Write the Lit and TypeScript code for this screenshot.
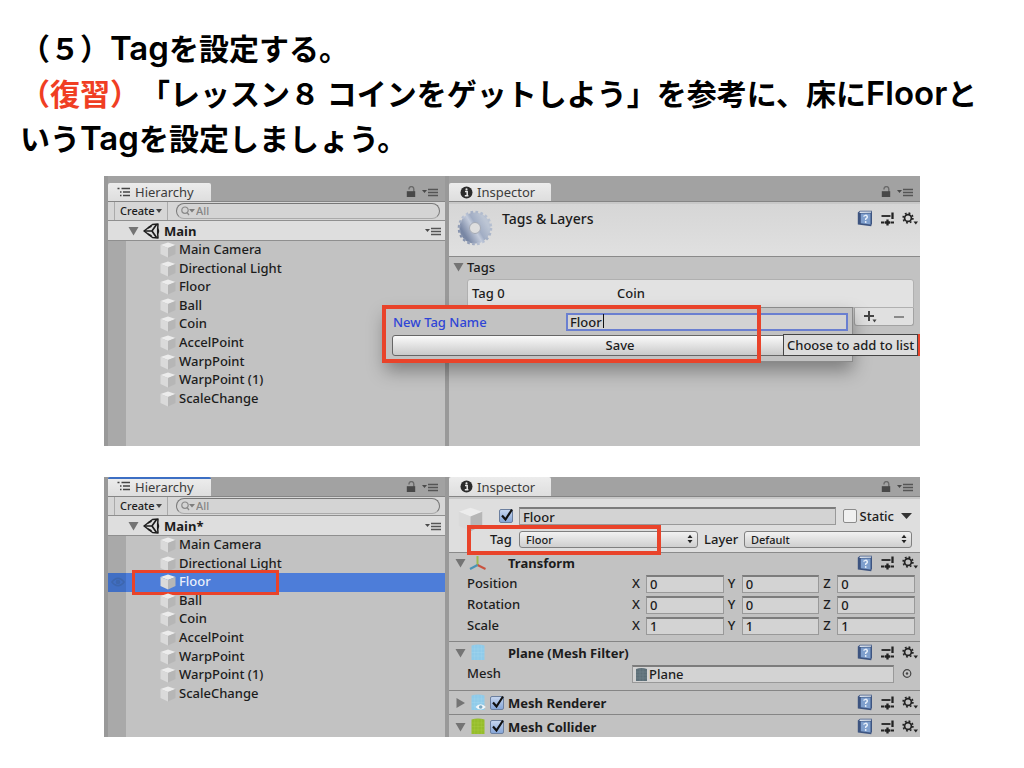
import { LitElement, html, css, svg, nothing } from "lit";
import { customElement, property } from "lit/decorators.js";

const base = css`
  * { box-sizing: border-box; }
  :host { display: block; min-width: 0; font: 500 13px/18px "Noto Sans", "Open Sans", sans-serif; color: #1c1c1c; }
  button, input, select {
    font: inherit; color: inherit; margin: 0; padding: 0; border: 0;
    background: none; border-radius: 0; appearance: none; outline: 0; min-width: 0;
  }
  svg { display: block; flex: none; }
  button { display: flex; align-items: center; flex: none; }
  .tabs {
    display: flex; align-items: center; height: 26px; padding: 7px 6px 0 0;
    background: #a2a2a2; border-bottom: 1px solid #858585;
  }
  .tabs.cut { height: 20px; padding-top: 0; }
  .tab {
    height: 100%; width: 103px; padding-left: 9px; gap: 4px; color: #3c3c3c; font-weight: 400;
    background: linear-gradient(#ececec, #dedede); border-radius: 2px 2px 0 0;
  }
  .tab.focus { border-top: 2px solid #3c6fc4; padding-bottom: 2px; }
  .tools { display: flex; align-items: center; gap: 6px; margin-left: auto; }
`;

const menuIcon = svg`<svg width="17" height="10" viewBox="0 0 17 10"><path d="M0 3h5l-2.500 3z" fill="#4a4a4a"/><path d="M6 2.500h10M6 5.500h10M6 8.500h10" stroke="#555" stroke-width="1.300"/></svg>`;
const lockIcon = svg`<svg width="10" height="12" viewBox="0 0 10 12"><path d="M3 3.500V3a2.400 2.400 0 0 1 4.800 0V6" fill="none" stroke="#6a6a6a" stroke-width="1.400"/><rect x=".8" y="5.200" width="8.400" height="5.800" fill="#484848"/></svg>`;
const listIcon = svg`<svg width="14" height="11" viewBox="0 0 14 11"><path d="M4.500 1.500H13M6 5h7M6 8.500h7" stroke="#444" stroke-width="1.300"/><path d="M.5 1.500h2M3 5h1.500M3 8.500h1.500" stroke="#444" stroke-width="1.500"/></svg>`;
const infoIcon = svg`<svg width="13" height="13" viewBox="0 0 13 13"><circle cx="6.500" cy="6.500" r="6" fill="#2b2b2b"/><path d="M5 5.500h2.200V9.500M4.800 9.700h3.600" stroke="#e8e8e8" stroke-width="1.500" fill="none"/><circle cx="6.500" cy="3.300" r="1.100" fill="#e8e8e8"/></svg>`;
const downTri = svg`<svg width="11" height="10" viewBox="0 0 11 10"><path d="M.5 1h10L5.500 9.500z" fill="#747474"/></svg>`;
const rightTri = svg`<svg width="11" height="10" viewBox="0 0 11 10"><path d="M1.500 0v10L10 5z" fill="#747474"/></svg>`;
const unityIcon = svg`<svg width="17" height="16" viewBox="0 0 17 16"><path d="M1 8 9.500 1.500 15 1l-.3 5L15.500 8l-.8 2.500.3 4.500-5.500-.5z" fill="none" stroke="#1d1d1d" stroke-width="1.500" stroke-linejoin="round"/><path d="M1.500 8H9l4.500-6.500M9 8l4.500 6.500M5 5l3.500-2M5 11l3.500 2M14.800 5.500v5" stroke="#1d1d1d" stroke-width="1.700" fill="none"/></svg>`;
const cube = (s: number) => svg`<svg width=${s} height=${s} viewBox="0 0 16 16"><path d="M8 .5 15.500 3 8 6 .5 3z" fill="#ececec"/><path d="M.5 3 8 6v9.500L.5 12z" fill="#dadada"/><path d="M15.500 3 8 6v9.500l7.500-3.500z" fill="#b6b6b6"/></svg>`;
const eyeIcon = svg`<svg width="14" height="10" viewBox="0 0 14 10"><path d="M.8 5Q7-2.500 13.200 5 7 12.500.8 5z" fill="none" stroke="#3d66ae" stroke-width="1.300"/><circle cx="7" cy="5" r="2.300" fill="#3d66ae"/></svg>`;
const searchIcon = svg`<svg width="14" height="10" viewBox="0 0 14 10"><circle cx="4" cy="4.200" r="3.200" fill="none" stroke="#8a8a8a" stroke-width="1.200"/><path d="m6 6.500 2 2.500" stroke="#8a8a8a" stroke-width="1.300"/><path d="M8 3h6l-3 3.500z" fill="#7d7d7d"/></svg>`;
const bookIcon = svg`<svg width="16" height="17" viewBox="0 0 16 17"><path d="M.8 2.500 3 .8h12v12.500l-.8 2.900L.8 14.500z" fill="#3d5480"/><path d="M3 1.500h11.500l-.6 1.200-11.500.3z" fill="#dfe6ef"/><path d="M3.800 3.500h9.700v11L3.800 13.300z" fill="#7f9fcd"/><path d="M6.500 6.500Q8.700 4.300 10.200 6.200q.6 1.500-1.500 2.600v1.100" fill="none" stroke="#e9f0fa" stroke-width="1.400"/><circle cx="8.700" cy="12" r=".9" fill="#e9f0fa"/></svg>`;
const presetIcon = svg`<svg width="13" height="14" viewBox="0 0 13 14"><path d="M.5 4H9.500" stroke="#222" stroke-width="1.800"/><path d="M11.500 .5V7" stroke="#222" stroke-width="2.300"/><path d="M0 10.500h3.500M9.500 10.500H13" stroke="#222" stroke-width="1.800"/><path d="M6.500 7.500v6M4 10.500h5" stroke="#222" stroke-width="2.300"/></svg>`;
const gearIcon = svg`<svg width="16" height="14" viewBox="0 0 16 14"><circle cx="6" cy="6" r="3.400" fill="none" stroke="#222" stroke-width="1.700"/><circle cx="6" cy="6" r="4.900" fill="none" stroke="#222" stroke-width="1.600" stroke-dasharray="1.800 2.048"/><path d="M11.500 9.500h4.500L13.800 12.500z" fill="#222"/></svg>`;
const bigGear = svg`<svg width="36" height="36" viewBox="0 0 36 36"><defs><linearGradient id="steel" x1="0" y1=".8" x2="1" y2=".2"><stop offset="0" stop-color="#7987a4"/><stop offset=".45" stop-color="#c3cbdb"/><stop offset=".6" stop-color="#a1adc4"/><stop offset="1" stop-color="#bcc5d4"/></linearGradient></defs><circle cx="18" cy="18" r="10.500" fill="none" stroke="url(#steel)" stroke-width="10"/><circle cx="18" cy="18" r="16" fill="none" stroke="url(#steel)" stroke-width="2.600" stroke-dasharray="2.700 2.326"/><circle cx="18" cy="18" r="5.500" fill="#dedede" stroke="#a2a8b4"/></svg>`;
const axesIcon = svg`<svg width="18" height="16" viewBox="0 0 18 16"><path d="M8.500 10V1" stroke="#9dbb4d" stroke-width="2"/><path d="M8.500 10 16.500 14" stroke="#c9523e" stroke-width="2"/><path d="M8.500 10 1 14" stroke="#4a93b5" stroke-width="2"/></svg>`;
const mesh = (fill: string, line: string, eye = false) => svg`<svg width="16" height="17" viewBox="0 0 16 17"><path d="M1.500 1.500Q8-.3 14.500 1.500V16h-13z" fill=${fill}/><path d="M1.500 5h13M1.500 8.500h13M1.500 12h13M4.700 1v15M8 1v15M11.300 1v15" stroke=${line} stroke-width=".5" stroke-opacity=".5"/>${eye ? svg`<path d="M5.500 13Q10.500 7.500 15.800 13 10.500 18 5.500 13z" fill="#f4f8fb"/><circle cx="10.700" cy="13" r="1.800" fill="#7ba7c0"/>` : nothing}</svg>`;
const upDown = svg`<svg width="6" height="10" viewBox="0 0 6 10"><path d="M.5 4h5L3 .8zM.5 6h5L3 9.200z" fill="#222"/></svg>`;

@customElement("hierarchy-pane")
class HierarchyPane extends LitElement {
  @property() scene = "Main";
  @property() selected = "";
  @property({ type: Boolean }) focused = false;

  static styles = [base, css`
    :host { display: flex; flex-direction: column; background: #c2c2c2; border-left: 4px solid #999; border-right: 4px solid #999; }
    .bar { display: flex; align-items: center; height: 19px; padding: 0 5px 0 6px; background: #d6d6d6; border-bottom: 1px solid #8f8f8f; }
    .create { height: 100%; width: 54px; padding: 0 5px; justify-content: space-between; font-size: 11px; border-left: 1px solid #aaa; border-right: 1px solid #aaa; }
    .search { display: flex; align-items: center; flex: 1; height: 16px; margin-left: 8px; padding-left: 4px; gap: 1px; border: 1px solid #777; border-bottom-color: #aaa; border-radius: 8px; background: #d4d4d4; }
    .search input { flex: 1; font-size: 11px; line-height: 14px; height: 14px; }
    .search input::placeholder { color: #858585; opacity: 1; }
    .scene { display: flex; align-items: center; height: 20px; padding: 0 3px 0 20px; gap: 4px; background: #dedede; border-bottom: 1px solid #8f8f8f; font-weight: 700; }
    .scene .more { margin-left: auto; }
    .tree { flex: 1; background: linear-gradient(90deg, #a9a9a9 18px, #c2c2c2 18px); }
    ul { display: grid; grid-auto-rows: 1fr; height: 167px; margin: 0; padding: 0; list-style: none; }
    li { position: relative; display: flex; align-items: center; min-height: 0; padding-left: 52px; gap: 3px; }
    li .name { line-height: 16px; padding-bottom: 2px; }
    li.on { background: linear-gradient(90deg, #416fc4 18px, #4d7dd9 18px); color: #e9effb; }
    .eye { position: absolute; left: 3px; }
    .mark { position: absolute; left: 24px; top: -3px; bottom: -3px; width: 147px; border: 3px solid #e9432a; }
  `];

  render() {
    const items = ["Main Camera", "Directional Light", "Floor", "Ball", "Coin", "AccelPoint", "WarpPoint", "WarpPoint (1)", "ScaleChange"];
    return html`
      <div class="tabs ${this.focused ? "cut" : ""}">
        <button class="tab ${this.focused ? "focus" : ""}">${listIcon}Hierarchy</button>
        <span class="tools">${lockIcon}${menuIcon}</span>
      </div>
      <div class="bar">
        <button class="create">Create <svg width="6" height="4" viewBox="0 0 6 4"><path d="M0 0h6L3 4z" fill="#444"/></svg></button>
        <label class="search">${searchIcon}<input type="search" placeholder="All" aria-label="Search" /></label>
      </div>
      <div class="scene">${downTri}${unityIcon}<span>${this.scene}</span><button class="more" aria-label="Scene menu">${menuIcon}</button></div>
      <div class="tree"><ul>
        ${items.map((name) => name === this.selected
          ? html`<li class="on"><span class="eye">${eyeIcon}</span>${cube(16)}<span class="name">${name}</span><span class="mark"></span></li>`
          : html`<li>${cube(16)}<span class="name">${name}</span></li>`)}
      </ul></div>`;
  }
}

const inspectorBase = css`
  :host { background: #c2c2c2; }
  .tab { width: 102px; padding-left: 11px; gap: 4px; }
  .icons { display: flex; align-items: center; gap: 8px; margin-left: auto; }
`;
const headIcons = html`<span class="icons"><button aria-label="Help">${bookIcon}</button><button aria-label="Presets">${presetIcon}</button><button aria-label="Settings">${gearIcon}</button></span>`;

@customElement("tags-inspector")
class TagsInspector extends LitElement {
  static styles = [base, inspectorBase, css`
    .head { display: flex; align-items: flex-start; height: 55px; padding: 6px 2px 0 8px; gap: 9px; border-top: 2px solid #c8c8c8; border-bottom: 1px solid #8a8a8a; background: linear-gradient(#d6d6d6, #e0e0e0); font-size: 14px; }
    .group { display: flex; align-items: center; gap: 3px; height: 22px; padding: 0 0 2px 4px; }
    .list { margin: 0 6px 0 18px; height: 29px; padding: 0 4px 2px; display: grid; grid-template-columns: 145px 1fr; align-items: center; background: #e2e2e2; border: 1px solid #b0b0b0; border-radius: 3px 3px 0 0; }
    .foot { display: flex; justify-content: space-around; align-items: center; width: 60px; height: 18px; margin: 0 6px 0 auto; background: #e0e0e0; border: 1px solid #a2a2a2; border-top: 0; border-radius: 0 0 3px 3px; }
  `];
  render() {
    return html`
      <div class="tabs"><button class="tab">${infoIcon}Inspector</button><span class="tools">${lockIcon}${menuIcon}</span></div>
      <div class="head">${bigGear}<span>Tags &amp; Layers</span>${headIcons}</div>
      <div class="group">${downTri}<span>Tags</span></div>
      <div class="list"><span>Tag 0</span><span>Coin</span></div>
      <div class="foot">
        <button aria-label="Add tag"><svg width="13" height="12" viewBox="0 0 13 12"><path d="M0 5h10M5 0v10" stroke="#444" stroke-width="2"/><path d="M8.500 8.500h4l-2 3z" fill="#444"/></svg></button>
        <button aria-label="Remove tag"><svg width="10" height="4" viewBox="0 0 10 4"><path d="M0 2h10" stroke="#8a8a8a" stroke-width="2"/></svg></button>
      </div>`;
  }
}

@customElement("object-inspector")
class ObjectInspector extends LitElement {
  static styles = [base, inspectorBase, css`
    .head { position: relative; height: 56px; padding: 7px 8px 0 9px; display: flex; border-top: 2px solid #c8c8c8; border-bottom: 1px solid #8a8a8a; background: #dedede; }
    .thumb { padding-top: 1px; }
    .rows { flex: 1; min-width: 0; display: grid; gap: 3px; align-content: start; }
    .row { display: flex; align-items: center; height: 20px; min-width: 0; }
    .first { padding-left: 16px; }
    .first .active { margin-right: 6px; }
    .box { width: 14px; height: 14px; flex: none; background: #f0f0f0; border: 1px solid #8b8b8b; border-radius: 2px; }
    .tick { position: relative; display: flex; flex: none; }
    .tick .box { background: linear-gradient(#c5d5ee, #86a6d8); border-color: #6b7f9f; }
    .tick svg { position: absolute; left: 1px; top: -1px; pointer-events: none; }
    .field { height: 18px; padding: 0 3px; line-height: 15px; background: #d3d3d3; border: 1px solid #999; border-top: 2px solid #7c7c7c; }
    .first .field { flex: 1; margin-right: 7px; }
    .static { display: flex; align-items: center; gap: 3px; margin-right: 7px; }
    .pick { position: relative; display: flex; align-items: center; flex: 179 1 0; min-width: 0; }
    .pick.narrow { flex-grow: 168; }
    .pick select { width: 100%; height: 17px; padding: 0 6px; font-size: 11px; line-height: 15px; border: 1px solid #808080; border-radius: 3px; background: linear-gradient(#f2f2f2, #cfcfcf); }
    .pick svg { position: absolute; right: 5px; pointer-events: none; }
    .second { padding-left: 7px; }
    .second label { width: 23px; margin-right: 6px; }
    .second .layer { width: 34px; margin: 0 6px; }
    .mark { position: absolute; left: 18px; top: 26px; width: 194px; height: 30px; border: 4px solid #e9432a; z-index: 1; }
    .comp { border-bottom: 1px solid #858585; }
    .title { display: flex; align-items: center; height: 20px; padding: 0 2px 0 6px; gap: 3px; font-weight: 700; }
    .title .icon { width: 18px; display: flex; justify-content: center; }
    .title .slot { width: 15px; }
    .vec { display: flex; align-items: center; height: 21px; padding: 0 5px 0 18px; gap: 4px; }
    .vec .label { width: 161px; flex: none; padding-bottom: 2px; }
    .axis { display: flex; align-items: center; flex: 1; min-width: 0; }
    .axis span { width: 14px; flex: none; padding-bottom: 2px; }
    .axis .field { flex: 1; }
    .transform { height: 89px; }
    .filter { height: 49px; }
    .filter .title { height: 21px; }
    .small { height: 24px; }
    .small .title, .last .title { height: 23px; }
    .last { height: 22px; border-bottom: 0; }
    .obj { display: flex; align-items: center; flex: 1; gap: 2px; }
    .obj input { flex: 1; line-height: 15px; }
    .aim { padding: 0 0 0 2px; }
  `];

  private tick(label: string) {
    return html`<span class="tick"><input class="box" type="checkbox" checked aria-label=${label} /><svg width="14" height="14" viewBox="0 0 14 14"><path d="M2 7.500 5.500 11.500 12 1.500" fill="none" stroke="#111" stroke-width="2.200"/></svg></span>`;
  }
  private vec(label: string, value: string) {
    return html`<div class="vec"><span class="label">${label}</span>
      ${["X", "Y", "Z"].map((a) => html`<label class="axis"><span>${a}</span><input class="field" .value=${value} aria-label="${label} ${a}" /></label>`)}</div>`;
  }
  private title(name: string, icon: unknown, open = true, check = false) {
    return html`<div class="title">${open ? downTri : rightTri}<span class="icon">${icon}</span><span class="slot">${check ? this.tick(name) : nothing}</span><span>${name}</span>${headIcons}</div>`;
  }
  render() {
    return html`
      <div class="tabs cut"><button class="tab">${infoIcon}Inspector</button><span class="tools">${lockIcon}${menuIcon}</span></div>
      <div class="head">
        <span class="thumb">${cube(25)}</span>
        <div class="rows">
          <div class="row first"><span class="active">${this.tick("Active")}</span><input class="field" value="Floor" aria-label="Name" />
            <label class="static"><input class="box" type="checkbox" />Static</label>
            <svg width="11" height="6" viewBox="0 0 11 6"><path d="M0 0h11L5.500 6z" fill="#333"/></svg></div>
          <div class="row second"><label for="tag">Tag</label><span class="pick"><select id="tag"><option>Floor</option></select>${upDown}</span>
            <label class="layer" for="layer">Layer</label><span class="pick narrow"><select id="layer"><option>Default</option></select>${upDown}</span></div>
        </div>
        <span class="mark"></span>
      </div>
      <div class="comp transform">${this.title("Transform", axesIcon)}${this.vec("Position", "0")}${this.vec("Rotation", "0")}${this.vec("Scale", "1")}</div>
      <div class="comp filter">${this.title("Plane (Mesh Filter)", mesh("#8fcbea", "#b5dff3"))}
        <div class="vec"><label class="label" for="mesh">Mesh</label>
          <span class="field obj"><svg width="11" height="13" viewBox="0 0 11 13"><path d="M0 1Q5.500-1 11 1v12H0z" fill="#5d6f78"/><path d="M0 4h11M0 7h11M0 10h11M4 0v13M7 0v13" stroke="#73858e" stroke-width=".6"/></svg><input id="mesh" value="Plane" /></span>
          <button class="aim" aria-label="Select mesh"><svg width="15" height="11" viewBox="0 0 15 11"><circle cx="7" cy="5.500" r="3.800" fill="none" stroke="#444" stroke-width="1.200"/><circle cx="7" cy="5.500" r="1.200" fill="#444"/></svg></button></div></div>
      <div class="comp small">${this.title("Mesh Renderer", mesh("#8fcbea", "#b5dff3", true), false, true)}</div>
      <div class="comp last">${this.title("Mesh Collider", mesh("#96bd2b", "#b6d653"), true, true)}</div>`;
  }
}

@customElement("new-tag-popup")
class NewTagPopup extends LitElement {
  static styles = [base, css`
    .popup { display: grid; gap: 4px; align-content: start; height: 55px; padding: 5px 4px 0 6px; background: #c2c2c2; border: 1px solid #8a8a8a; box-shadow: 0 9px 18px rgba(0, 0, 0, .35); }
    .line { display: flex; align-items: center; color: #2f45d6; }
    .line label { width: 174px; padding-left: 1px; flex: none; }
    .line input { flex: 1; height: 18px; padding: 0 2px; color: #1c1c1c; background: #d3d3d3; border: 2px solid #6a7fd0; }
    .caret { position: absolute; left: 218px; top: 7px; width: 1px; height: 14px; background: #111; }
    .save { justify-content: center; height: 21px; line-height: 18px; padding-bottom: 1px; border: 1px solid #666; border-radius: 3px; background: linear-gradient(#fafafa, #c9c9c9); }
    .mark { position: absolute; left: -3px; top: -2px; width: 379px; height: 58px; border: 4px solid #e9432a; }
    .tip { position: absolute; left: 398px; top: 27px; height: 22px; padding: 0 3px; line-height: 20px; white-space: nowrap; background: #dcdcdc; border: 1px solid #444; box-shadow: 2px 0 #e9432a; }
  `];
  render() {
    return html`<div class="popup">
      <div class="line"><label for="name">New Tag Name</label><input id="name" value="Floor" /></div>
      <button class="save">Save</button></div>
      <span class="caret"></span><span class="mark"></span><span class="tip" role="tooltip">Choose to add to list</span>`;
  }
}

@customElement("app-root")
class AppRoot extends LitElement {
  static styles = css`
    * { box-sizing: border-box; }
    :host { display: block; min-height: 100vh; background: #fff; color: #000; }
    h1 { margin: 0; padding: 25px 20px 16px; font: 600 30px/45px "Noto Sans CJK JP", sans-serif; text-spacing-trim: space-all; }
    .latin { font-family: Inter, sans-serif; font-size: 33px; line-height: 30px; }
    .red { color: #f03e23; }
    main { display: grid; gap: 31px; padding: 0 104px; }
    .shot { position: relative; display: grid; grid-template-columns: minmax(0, 345fr) minmax(0, 471fr); overflow: hidden; }
    .tall { min-height: 270px; }
    new-tag-popup { position: absolute; left: 281px; top: 131px; width: 468px; }
  `;
  render() {
    return html`
      <h1>（５）<span class="latin">Tag</span>を設定する。<br /><span class="red">（復習）</span>「レッスン８ コインをゲットしよう」を参考に、床に<span class="latin">Floor</span>という<span class="latin">Tag</span>を設定しましょう。</h1>
      <main>
        <section class="shot tall"><hierarchy-pane scene="Main"></hierarchy-pane><tags-inspector></tags-inspector><new-tag-popup></new-tag-popup></section>
        <section class="shot"><hierarchy-pane scene="Main*" selected="Floor" focused></hierarchy-pane><object-inspector></object-inspector></section>
      </main>`;
  }
}
